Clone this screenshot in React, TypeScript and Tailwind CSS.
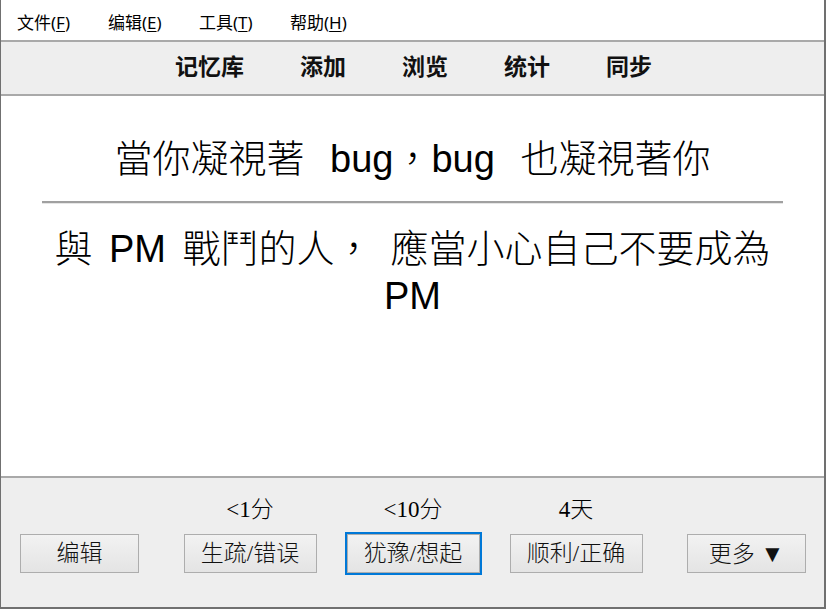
const menus = [
  { label: '文件', key: 'F' },
  { label: '编辑', key: 'E' },
  { label: '工具', key: 'T' },
  { label: '帮助', key: 'H' },
];

const tabs = ['记忆库', '添加', '浏览', '统计', '同步'];

const answers = [
  { due: '<1分', label: '生疏/错误', focused: false },
  { due: '<10分', label: '犹豫/想起', focused: true },
  { due: '4天', label: '顺利/正确', focused: false },
];

const uiFont = { fontFamily: '"Noto Sans", "Noto Sans CJK SC", sans-serif' };
const serifFont = { fontFamily: '"Liberation Serif", "Noto Sans CJK SC", serif' };
const cardFont = { fontFamily: '"Liberation Sans", "Noto Sans CJK TC", sans-serif' };

const Btn = ({ children, focused = false, wide = false }: { children: React.ReactNode; focused?: boolean; wide?: boolean }) => (
  <div className={`border-2 ${focused ? 'border-[#0078d7]' : 'border-transparent'}`}>
    <button
      className={`${wide ? 'w-[119px]' : 'w-[133px]'} h-[39px] border border-[#adadad] bg-gradient-to-b from-[#f2f2f2] to-[#e4e4e4] text-[23px] font-light text-[#111] leading-none`}
      style={serifFont}
    >
      {children}
    </button>
  </div>
);

export default function App() {
  return (
    <div className="w-[826px] h-[609px] flex flex-col bg-white border-l border-r-2 border-b-2 border-[#707070] overflow-hidden">
      {/* menu bar */}
      <div className="h-[40px] flex items-center pl-[16px] pt-[6px] text-[17px] text-black shrink-0" style={uiFont}>
        {menus.map((m) => (
          <div key={m.key} className="w-[91px]">
            {m.label}(<span className="underline underline-offset-2">{m.key}</span>)
          </div>
        ))}
      </div>

      {/* toolbar */}
      <div className="h-[56px] shrink-0 bg-[#eeeeee] border-y-2 border-[#a9a9a9] flex items-center justify-center gap-[56px] pl-[2px] pb-[5px]">
        {tabs.map((t) => (
          <span key={t} className="text-[23px] font-bold text-[#111] leading-none" style={{ fontFamily: '"Noto Sans CJK SC", sans-serif' }}>
            {t}
          </span>
        ))}
      </div>

      {/* card */}
      <div className="flex-1 flex flex-col text-black font-light" style={cardFont}>
        <div className="pt-[40px] text-center text-[38px] leading-[47px] [word-spacing:15px]">
          當你凝視著 bug，bug 也凝視著你
        </div>
        <div className="mx-[41px] mt-[18px] border-t-2 border-[#a0a0a0] border-b border-b-[#e6e6e6]" />
        <div className="px-[30px] mt-[22px] text-center text-[38px] leading-[47px] [word-spacing:6px]">
          與 PM 戰鬥的人<span className="mr-[18px]">，</span>應當小心自己不要成為 PM
        </div>
      </div>

      {/* answer bar */}
      <div className="h-[131px] shrink-0 bg-[#eeeeee] border-t-2 border-[#a9a9a9] flex items-end justify-between pl-[17px] pr-[16px] pb-[32px]">
        <Btn wide>编辑</Btn>
        <div className="flex gap-[26px]">
          {answers.map((a) => (
            <div key={a.label} className="flex flex-col items-center">
              <div className="text-[23px] font-light leading-none mb-[11px] text-black" style={serifFont}>
                {a.due}
              </div>
              <Btn focused={a.focused}>{a.label}</Btn>
            </div>
          ))}
        </div>
        <Btn wide>
          更多 <span className="text-[24px]">▼</span>
        </Btn>
      </div>
    </div>
  );
}
